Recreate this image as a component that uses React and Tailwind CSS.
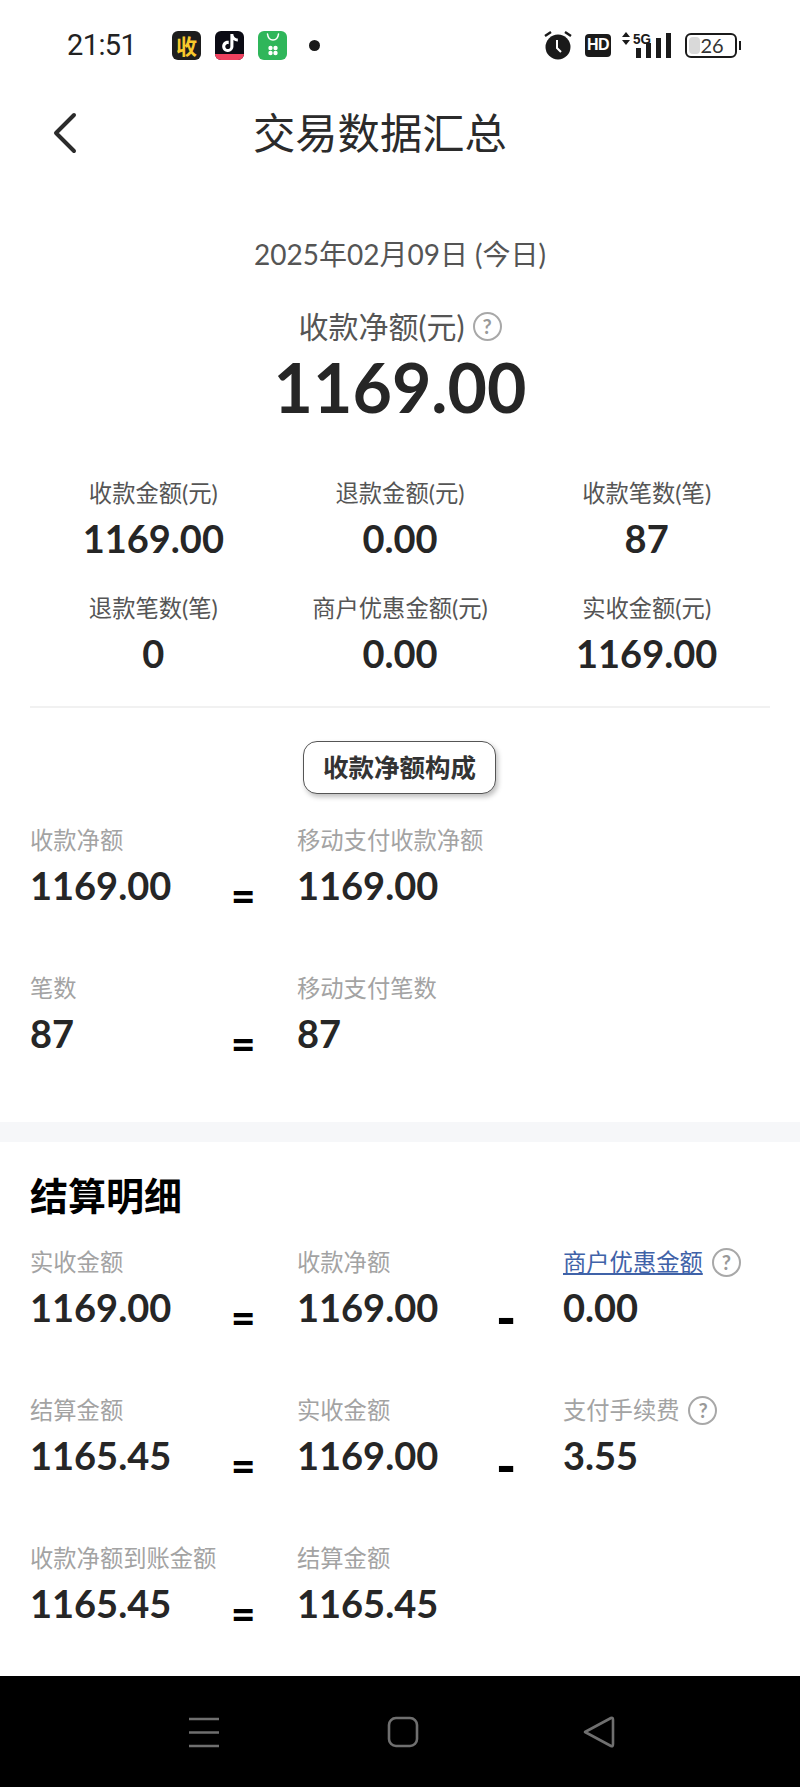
import React from "react";
import { SiTiktok } from "react-icons/si";

const FONT = "font-['Lato','Noto_Sans_CJK_SC',sans-serif]";

const Help = () => (
  <span className="inline-flex h-[29px] w-[29px] items-center justify-center rounded-full border-2 border-[#a8a8a8] text-[20px] font-bold text-[#999]">
    ?
  </span>
);

/* status bar */
const StatusBar = () => (
  <div className="flex h-[90px] items-center pl-[67px] pr-[59px]">
    <span className="w-[105px] font-['Roboto',sans-serif] text-[29px] leading-none tracking-[-0.6px] text-[#222]">21:51</span>
    <div className="flex items-center gap-[14px]">
      <div className="flex h-[29px] w-[29px] items-center justify-center rounded-md bg-[#1d1d1d] text-[21px] leading-none font-bold text-[#f8c92c]">
        收
      </div>
      <div className="flex h-[29px] w-[29px] flex-col items-center overflow-hidden rounded-md bg-[#0b0b14]">
        <SiTiktok className="mt-[3px] text-[18px] text-white" />
        <div className="mt-auto h-[6px] w-full bg-[#f0415f]" />
      </div>
      <div className="flex h-[29px] w-[29px] items-center justify-center rounded-md bg-[#2fb65a]">
        <svg width="22" height="25" viewBox="0 0 22 25" fill="none">
          <path d="M5.500 1c0.500 4 3 6 5.500 6s5-2 5.500-6" stroke="#fff" strokeWidth="1.500" strokeLinecap="round" />
          <circle cx="8.500" cy="15" r="2.200" fill="#fff" />
          <circle cx="13.500" cy="15" r="2.200" fill="#fff" />
          <circle cx="8.500" cy="20" r="2.200" fill="#fff" />
          <circle cx="13.500" cy="20" r="2.200" fill="#fff" />
        </svg>
      </div>
      <div className="ml-[8px] h-[11px] w-[11px] rounded-full bg-[#1a1a1a]" />
    </div>
    <div className="ml-auto flex items-center">
      <svg width="28" height="30" viewBox="0 0 28 30">
        <circle cx="14" cy="17" r="12.500" fill="#1a1a1a" />
        <path d="M13 10v8l4 4" stroke="#fff" strokeWidth="2" fill="none" />
        <path d="M1 6l6-4M27 6l-6-4" stroke="#1a1a1a" strokeWidth="2.400" />
      </svg>
      <div className="ml-[13px] flex h-[23px] w-[26px] items-center justify-center rounded bg-[#1a1a1a] font-['Liberation_Sans',sans-serif] text-[16px] leading-none font-bold tracking-[-0.5px] text-white">
        HD
      </div>
      <div className="relative ml-[11px] h-[28px] w-[50px]">
        <svg width="50" height="28" viewBox="0 0 50 28">
          <rect x="14" y="17" width="5" height="10" fill="#1a1a1a" />
          <rect x="24" y="12" width="5" height="15" fill="#1a1a1a" />
          <rect x="34" y="7" width="5" height="20" fill="#1a1a1a" />
          <rect x="44" y="2" width="5" height="25" fill="#1a1a1a" />
        </svg>
        <div className="absolute top-0 left-0 flex h-[14px] items-center">
          <svg width="9" height="14" viewBox="0 0 9 14">
            <path d="M0 6l4-5 4 5zM0 9l4 5 4-5z" fill="#1a1a1a" />
          </svg>
          <span className="ml-[2px] origin-left scale-x-90 font-['Liberation_Sans',sans-serif] text-[15px] leading-none font-bold text-[#1a1a1a]">5G</span>
        </div>
      </div>
      <div className="relative ml-[13px] flex h-[25px] w-[52px] items-center justify-center rounded-[6px] border-2 border-[#1a1a1a] text-[20px] leading-none text-[#333]">
        <div className="absolute top-[2px] left-[2px] h-[17px] w-[11px] rounded-sm bg-[#d9d9d9]" />
        <span className="relative pl-[2px]">26</span>
      </div>
      <div className="ml-[2px] h-[9px] w-[2px] bg-[#1a1a1a]" />
    </div>
  </div>
);

const Stat = ({ label, value }) => (
  <div className="flex flex-col items-center">
    <div className="text-[23.3px] leading-[30px] text-[#555]">{label}</div>
    <div className="mt-[7px] text-[38px] leading-[46px] font-bold text-[#262626]">{value}</div>
  </div>
);

const Cell = ({ label, value, help, link, className = "" }) => (
  <div className={className}>
    <div className="flex h-[30px] items-center gap-[9px] text-[23.3px] leading-[30px] text-[#a3a3a3]">
      <span className={link ? "text-[#3f62a8] underline underline-offset-2" : ""}>{label}</span>
      {help && <Help />}
    </div>
    <div className="mt-[7px] text-[38px] leading-[46px] font-bold text-[#262626]">{value}</div>
  </div>
);

const Op = ({ children, className = "" }) => (
  <div className={`pt-[47px] leading-[46px] font-black text-black ${className}`}>{children}</div>
);

const Formula = ({ a, b, c }) => (
  <div className="flex h-[148px] last:h-auto">
    <Cell className="w-[198px]" label={a[0]} value={a[1]} />
    <Op className="w-[69px] pl-[3px] text-[42px]">=</Op>
    <Cell className="w-[198px]" label={b[0]} value={b[1]} />
    {c && <Op className="w-[68px] pl-[1px] text-[54px]">-</Op>}
    {c && <Cell label={c[0]} value={c[1]} help={c[2]} link={c[3]} />}
  </div>
);

export default function App() {
  return (
    <div className={`flex h-[1787px] w-[800px] flex-col overflow-hidden bg-white ${FONT}`}>
      <StatusBar />

      {/* nav */}
      <div className="flex h-[86px] items-center pl-[52px]">
        <svg width="26" height="42" viewBox="0 0 26 42" fill="none">
          <path d="M22 3L4 21l18 18" stroke="#2b2b2b" strokeWidth="4" strokeLinecap="round" strokeLinejoin="round" />
        </svg>
        <h1 className="ml-[175px] text-[42.3px] leading-none font-normal text-[#2b2b2b]">交易数据汇总</h1>
      </div>

      {/* summary */}
      <div className="flex flex-col items-center pt-[59px]">
        <div className="text-[28px] leading-[38px] text-[#555]">2025年02月09日 (今日)</div>
        <div className="mt-[34px] flex h-[38px] items-center gap-[8px] text-[30px] text-[#555]">
          收款净额(元)
          <Help />
        </div>
        <div className="mt-[-1px] text-[68px] leading-[86px] font-bold text-[#262626]">1169.00</div>
      </div>

      <div className="mt-[48px] grid grid-cols-3 gap-y-[32px] px-[30px]">
        <Stat label="收款金额(元)" value="1169.00" />
        <Stat label="退款金额(元)" value="0.00" />
        <Stat label="收款笔数(笔)" value="87" />
        <Stat label="退款笔数(笔)" value="0" />
        <Stat label="商户优惠金额(元)" value="0.00" />
        <Stat label="实收金额(元)" value="1169.00" />
      </div>

      <div className="mx-[30px] mt-[30px] h-[2px] bg-[#f1f1f1]" />

      <div className="mt-[33px] flex justify-center pr-[1px]">
        <div className="flex h-[53px] w-[193px] items-center justify-center rounded-[14px] border-[1.5px] border-[#555] bg-white text-[25.5px] font-bold text-[#333] shadow-[2px_3px_5px_rgba(0,0,0,0.25)]">
          收款净额构成
        </div>
      </div>

      <div className="mt-[31px] px-[30px]">
        <Formula a={["收款净额", "1169.00"]} b={["移动支付收款净额", "1169.00"]} />
        <div className="h-[148px]">
          <Formula a={["笔数", "87"]} b={["移动支付笔数", "87"]} />
        </div>
      </div>

      <div className="mt-[1px] h-[20px] bg-[#f6f7f9]" />

      <div className="px-[30px]">
        <h2 className="mt-[30px] text-[38px] leading-[46px] font-bold text-black">结算明细</h2>
        <div className="mt-[29px]">
          <Formula a={["实收金额", "1169.00"]} b={["收款净额", "1169.00"]} c={["商户优惠金额", "0.00", true, true]} />
          <Formula a={["结算金额", "1165.45"]} b={["实收金额", "1169.00"]} c={["支付手续费", "3.55", true]} />
          <Formula a={["收款净额到账金额", "1165.45"]} b={["结算金额", "1165.45"]} />
        </div>
      </div>

      {/* system nav */}
      <div className="mt-auto flex h-[111px] items-center bg-black">
        <svg className="ml-[188px]" width="32" height="32" viewBox="0 0 32 32" stroke="#6f6f6f" strokeWidth="2.600" fill="none">
          <path d="M1 3h30M1 16.500h30M1 30h30" />
        </svg>
        <svg className="ml-[167px]" width="32" height="32" viewBox="0 0 32 32" stroke="#6f6f6f" strokeWidth="2.600" fill="none">
          <rect x="2" y="2" width="28" height="28" rx="7" />
        </svg>
        <svg className="ml-[164px]" width="32" height="32" viewBox="0 0 32 32" stroke="#6f6f6f" strokeWidth="2.600" fill="none" strokeLinejoin="round">
          <path d="M2 16L28 2q2-1 2 2v24q0 3-2 2z" />
        </svg>
      </div>
    </div>
  );
}
